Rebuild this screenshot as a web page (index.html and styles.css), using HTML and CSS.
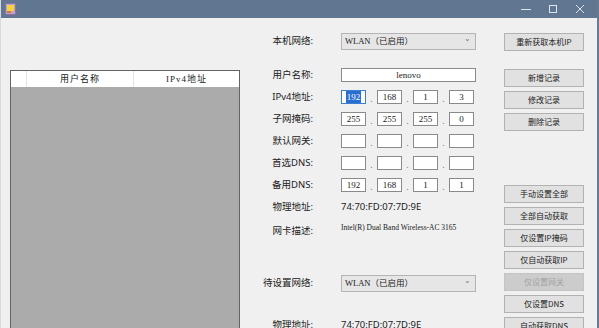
FILE: index.html
```html
<!doctype html>
<html lang="zh-CN">

<head>
    <meta charset="UTF-8" />
    <meta name="viewport" content="width=device-width, initial-scale=1.0" />
    <title>IP设置工具</title>
    <link rel="stylesheet" href="styles.css">
</head>

<body>
    <div class="window">
        <div class="titlebar">
            <svg class="app-icon" width="11" height="12" viewBox="0 0 11 12">
                <rect x="0.5" y="0.5" width="10" height="11" fill="#b9a6c8" stroke="#8a6fa3" />
                <rect x="2" y="2" width="7" height="6" fill="#f4d43a" />
                <rect x="2" y="8" width="4" height="2" fill="#e0703c" />
            </svg>
            <div class="controls">
                <span class="ctl">
                    <svg width="10" height="10" viewBox="0 0 10 10"><path d="M0 5.5H10" stroke="#dde3ea" /></svg>
                </span>
                <span class="ctl">
                    <svg width="10" height="10" viewBox="0 0 10 10"><rect x="1.5" y="1.5" width="7" height="7" fill="none" stroke="#dde3ea" /></svg>
                </span>
                <span class="ctl">
                    <svg width="10" height="10" viewBox="0 0 10 10"><path d="M1 1L9 9M9 1L1 9" stroke="#dde3ea" /></svg>
                </span>
            </div>
        </div>

        <div class="client">
            <div class="grid-view">
                <div class="grid-header">
                    <div class="row-header"></div>
                    <div class="col col-name">用户名称</div>
                    <div class="col col-ip">IPv4地址</div>
                </div>
            </div>

            <div class="form">
                <div class="row">
                    <label class="label">本机网络:</label>
                    <div class="combo"><span>WLAN（已启用）</span><span class="arrow">&#8964;</span></div>
                </div>
                <div class="row row-name">
                    <label class="label">用户名称:</label>
                    <div class="textbox center">lenovo</div>
                </div>
                <div class="row">
                    <label class="label">IPv4地址:</label>
                    <div class="ip">
                        <div class="ip-part focused"><span class="selected">192</span></div><span class="dot">.</span>
                        <div class="ip-part">168</div><span class="dot">.</span>
                        <div class="ip-part">1</div><span class="dot">.</span>
                        <div class="ip-part">3</div>
                    </div>
                </div>
                <div class="row">
                    <label class="label">子网掩码:</label>
                    <div class="ip">
                        <div class="ip-part">255</div><span class="dot">.</span>
                        <div class="ip-part">255</div><span class="dot">.</span>
                        <div class="ip-part">255</div><span class="dot">.</span>
                        <div class="ip-part">0</div>
                    </div>
                </div>
                <div class="row">
                    <label class="label">默认网关:</label>
                    <div class="ip">
                        <div class="ip-part"></div><span class="dot">.</span>
                        <div class="ip-part"></div><span class="dot">.</span>
                        <div class="ip-part"></div><span class="dot">.</span>
                        <div class="ip-part"></div>
                    </div>
                </div>
                <div class="row">
                    <label class="label">首选DNS:</label>
                    <div class="ip">
                        <div class="ip-part"></div><span class="dot">.</span>
                        <div class="ip-part"></div><span class="dot">.</span>
                        <div class="ip-part"></div><span class="dot">.</span>
                        <div class="ip-part"></div>
                    </div>
                </div>
                <div class="row">
                    <label class="label">备用DNS:</label>
                    <div class="ip">
                        <div class="ip-part">192</div><span class="dot">.</span>
                        <div class="ip-part">168</div><span class="dot">.</span>
                        <div class="ip-part">1</div><span class="dot">.</span>
                        <div class="ip-part">1</div>
                    </div>
                </div>
                <div class="row">
                    <label class="label">物理地址:</label>
                    <span class="value">74:70:FD:07:7D:9E</span>
                </div>
                <div class="row row-desc">
                    <label class="label">网卡描述:</label>
                    <span class="value desc">Intel(R) Dual Band Wireless-AC 3165</span>
                </div>
                <div class="row row-target">
                    <label class="label">待设置网络:</label>
                    <div class="combo"><span>WLAN（已启用）</span><span class="arrow">&#8964;</span></div>
                </div>
                <div class="row row-mac2">
                    <label class="label">物理地址:</label>
                    <span class="value">74:70:FD:07:7D:9E</span>
                </div>
            </div>

            <div class="buttons">
                <button class="btn">重新获取本机IP</button>
                <button class="btn group-start">新增记录</button>
                <button class="btn">修改记录</button>
                <button class="btn">删除记录</button>
                <button class="btn group-end">手动设置全部</button>
                <button class="btn">全部自动获取</button>
                <button class="btn">仅设置IP掩码</button>
                <button class="btn">仅自动获取IP</button>
                <button class="btn" disabled>仅设置网关</button>
                <button class="btn">仅设置DNS</button>
                <button class="btn">自动获取DNS</button>
            </div>
        </div>
    </div>
</body>

</html>
```

FILE: styles.css
```css
body {
    margin: 0;
    padding: 0;
    background-color: #f0f0f0;
    font-family: "Noto Sans", "Noto Sans CJK SC", sans-serif;
    color: #1a1a1a;
    overflow: hidden;
}

.window {
    width: 599px;
    height: 328px;
    box-sizing: border-box;
    border-left: 1px solid #d6d9dd;
    border-right: 2px solid #667a93;
    overflow: hidden;
}

.titlebar {
    height: 18px;
    background-color: #617690;
    display: flex;
    align-items: center;
    padding-left: 4px;
}

.app-icon {
    display: block;
}

.controls {
    margin-left: auto;
    display: flex;
    align-items: center;
    margin-right: 4px;
}

.ctl {
    width: 27px;
    display: flex;
    justify-content: center;
}

.ctl svg {
    display: block;
}

.client {
    display: flex;
    align-items: flex-start;
}

/* left data grid */
.grid-view {
    margin-left: 9px;
    margin-top: 52px;
    width: 230px;
    height: 300px;
    box-sizing: border-box;
    border: 1px solid #646464;
    background-color: #ababab;
}

.grid-header {
    display: flex;
    height: 16px;
    background-color: #ffffff;
    font-family: "Liberation Serif", "Noto Sans CJK SC", serif;
    font-size: 9px;
    letter-spacing: 1px;
    line-height: 16px;
}

.row-header {
    width: 15px;
    border-right: 1px solid #e3e3e3;
}

.col {
    text-align: center;
    border-right: 1px solid #e3e3e3;
}

.col-name {
    width: 106px;
}

.col-ip {
    flex: 1;
    border-right: none;
}

/* middle form */
.form {
    margin-left: 10px;
    padding-top: 12px;
    display: flex;
    flex-direction: column;
}

.row {
    height: 22px;
    display: flex;
    align-items: center;
}

.row-name {
    margin-top: 12px;
}

.row-desc {
    margin-top: 2px;
}

.row-target {
    margin-top: 30px;
}

.row-mac2 {
    margin-top: 20px;
}

.label {
    width: 63px;
    margin-right: 28px;
    text-align: right;
    font-size: 9.5px;
    line-height: 12px;
    color: #222;
}

.value {
    font-size: 9.5px;
    line-height: 12px;
}

.value.desc {
    font-family: "Liberation Serif", serif;
    font-size: 7.5px;
    margin-top: -6px;
}

.combo {
    width: 135px;
    height: 17px;
    box-sizing: border-box;
    border: 1px solid #b4b4b4;
    background-color: #e6e6e6;
    display: flex;
    align-items: center;
    padding-left: 3px;
    padding-right: 4px;
    font-family: "Liberation Serif", "Noto Sans CJK SC", serif;
    font-size: 8.5px;
    line-height: 12px;
}

.combo .arrow {
    margin-left: auto;
    color: #777;
    font-size: 8px;
    line-height: 8px;
    margin-top: -4px;
}

.textbox {
    width: 135px;
    height: 14px;
    box-sizing: border-box;
    border: 1px solid #8a8a8a;
    background-color: #ffffff;
    font-family: "Liberation Serif", serif;
    font-size: 9px;
    line-height: 12px;
}

.center {
    text-align: center;
}

.ip {
    display: flex;
    align-items: center;
}

.ip-part {
    width: 25px;
    height: 14px;
    box-sizing: border-box;
    border: 1px solid #8a8a8a;
    background-color: #ffffff;
    text-align: center;
    font-family: "Liberation Serif", serif;
    font-size: 9px;
    line-height: 12px;
}

.ip-part.focused {
    border-color: #3c7fd0;
}

.selected {
    display: inline-block;
    background-color: #2a6fcf;
    color: #ffffff;
    padding: 0 1px;
}

.dot {
    width: 11px;
    text-align: center;
    font-size: 9px;
    color: #777;
    line-height: 12px;
    margin-top: 4px;
}

/* right buttons */
.buttons {
    margin-left: 28px;
    padding-top: 15px;
    display: flex;
    flex-direction: column;
    gap: 4px;
}

.btn {
    width: 80px;
    height: 18px;
    margin: 0;
    padding: 0;
    box-sizing: border-box;
    border: 1px solid #b2b2b2;
    background-color: #e1e1e1;
    font-family: "Noto Sans CJK SC", sans-serif;
    font-size: 8px;
    line-height: 12px;
    color: #222;
}

.btn.group-start {
    margin-top: 14px;
}

.btn.group-end {
    margin-top: 50px;
}

.btn:disabled {
    background-color: #cccccc;
    border-color: #c4c4c4;
    color: #a3a3a3;
}
```
